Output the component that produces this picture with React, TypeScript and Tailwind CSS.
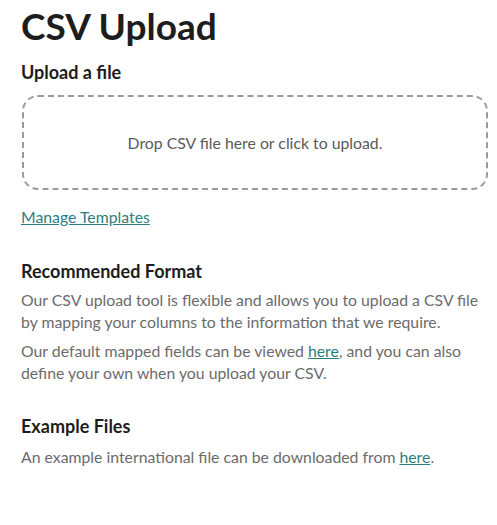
const font = { fontFamily: 'Lato, "Liberation Sans", sans-serif' }

export default function App() {
  return (
    <div className="min-h-screen bg-white pl-[21px] pr-[9px] pt-[2px]" style={font}>
      <h1 className="text-[37px] font-bold leading-[48px] text-[#1d1d1d]">CSV Upload</h1>
      <h2 className="mt-[11px] text-[18px] font-bold leading-[22px] text-[#1d1d1d]">Upload a file</h2>

      <div className="mt-[12px] ml-px flex h-[95px] cursor-pointer items-center justify-center rounded-[16px] border-2 border-dashed border-[#9a9a9a]">
        <p className="text-[15.8px] text-[#5a5a5a]">Drop CSV file here or click to upload.</p>
      </div>

      <a href="#" className="mt-[16px] inline-block text-[15.8px] leading-[22px] text-[#2d7d84] underline">
        Manage Templates
      </a>

      <h2 className="mt-[31px] text-[18px] font-bold leading-[22px] text-[#1d1d1d]">Recommended Format</h2>
      <p className="mt-[7px] text-[15.8px] leading-[22px] text-[#6b6b6b]">
        Our CSV upload tool is flexible and allows you to upload a CSV file by mapping your columns to the
        information that we require.
      </p>
      <p className="mt-[7px] text-[15.8px] leading-[22px] text-[#6b6b6b]">
        Our default mapped fields can be viewed{' '}
        <a href="#" className="text-[#2d7d84] underline">
          here
        </a>
        , and you can also define your own when you upload your CSV.
      </p>

      <h2 className="mt-[31px] text-[18px] font-bold leading-[22px] text-[#1d1d1d]">Example Files</h2>
      <p className="mt-[9px] text-[15.8px] leading-[22px] text-[#6b6b6b]">
        An example international file can be downloaded from{' '}
        <a href="#" className="text-[#2d7d84] underline">
          here
        </a>
        .
      </p>
    </div>
  )
}
